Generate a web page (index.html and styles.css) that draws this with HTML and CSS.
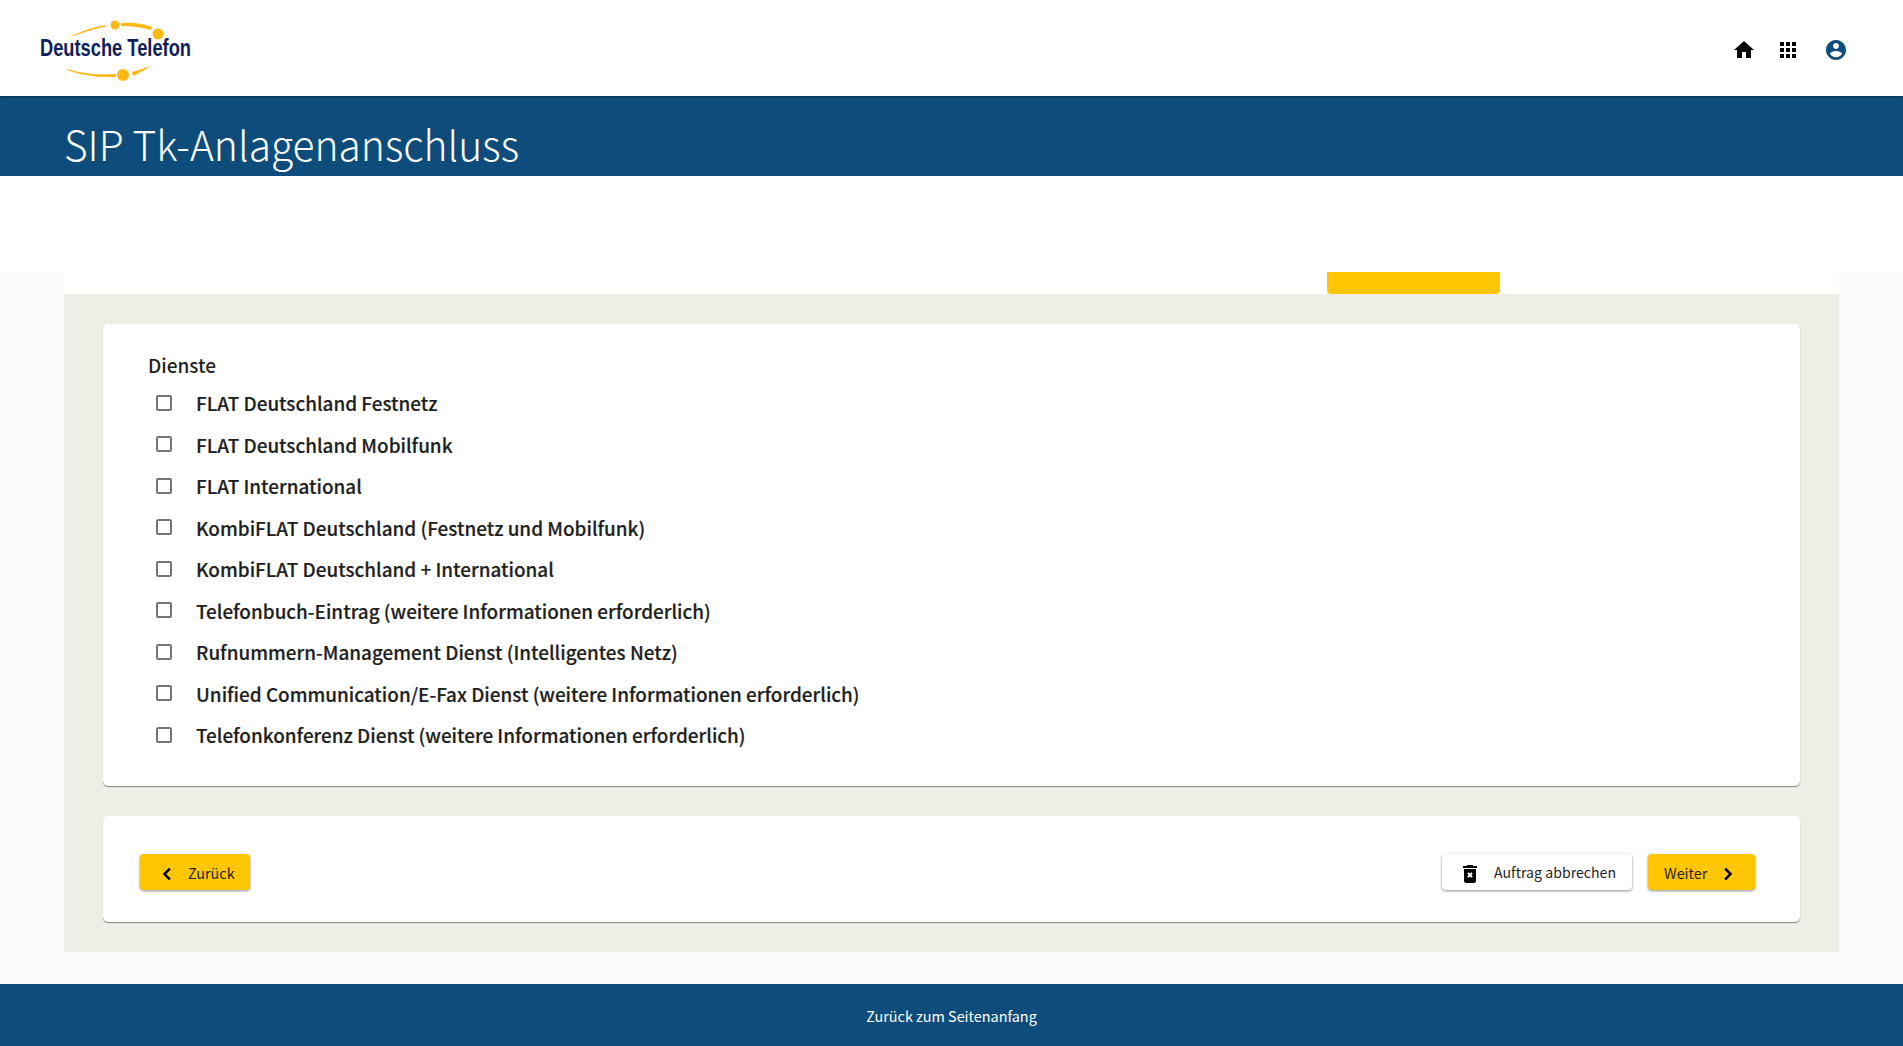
FILE: index.html
```html
<!DOCTYPE html>
<html lang="de">
<head>
  <meta charset="UTF-8" />
  <meta name="viewport" content="width=device-width, initial-scale=1.0" />
  <title>SIP Tk-Anlagenanschluss</title>
  <link rel="stylesheet" href="styles.css">
</head>
<body>
  <header class="topbar">
    <a class="logo" href="#">
      <svg width="152" height="58" viewBox="0 0 152 58">
        <path d="M31 16 Q48 8 66 5 L67 6 Q50 10 33 16 Z" class="logo-dot" />
        <path d="M81 3 Q98 2 112 7 L111 10 Q97 6 81 6 Z" class="logo-dot" />
        <circle cx="75" cy="5" r="4.5" class="logo-dot" />
        <circle cx="118" cy="14" r="5.5" class="logo-dot" />
        <path d="M27 49 Q48 56 76 54 L76 57 Q48 58 27 50 Z" class="logo-dot" />
        <circle cx="83" cy="55" r="6" class="logo-dot" />
        <path d="M92 52 Q103 49 110 46 Q104 51 93 56 Z" class="logo-dot" />
        <text x="0" y="35.500" class="logo-text" textLength="151" lengthAdjust="spacingAndGlyphs">Deutsche Telefon</text>
      </svg>
    </a>
    <nav class="topnav">
      <svg class="nav-icon" viewBox="0 0 24 24"><path d="M10 20v-6h4v6h5v-8h3L12 3 2 12h3v8z" /></svg>
      <svg class="nav-icon" viewBox="0 0 24 24"><path d="M4 8h4V4H4v4zm6 12h4v-4h-4v4zm-6 0h4v-4H4v4zm0-6h4v-4H4v4zm6 0h4v-4h-4v4zm6-10v4h4V4h-4zm-6 4h4V4h-4v4zm6 6h4v-4h-4v4zm0 6h4v-4h-4v4z" /></svg>
      <svg class="nav-icon nav-icon-blue" viewBox="0 0 24 24"><path d="M12 2C6.48 2 2 6.48 2 12s4.48 10 10 10 10-4.48 10-10S17.52 2 12 2zm0 3c1.66 0 3 1.34 3 3s-1.34 3-3 3-3-1.34-3-3 1.34-3 3-3zm0 14.2c-2.5 0-4.71-1.28-6-3.22.03-1.99 4-3.08 6-3.08 1.99 0 5.97 1.09 6 3.08-1.29 1.94-3.5 3.22-6 3.22z" /></svg>
    </nav>
  </header>

  <div class="banner">
    <h1>SIP Tk-Anlagenanschluss</h1>
  </div>

  <div class="stepper-space"></div>

  <main class="page">
    <div class="steps">
      <div class="step-active"></div>
    </div>
    <div class="panel">
      <section class="card card-services">
        <div class="group-title">Dienste</div>
        <label class="option"><input type="checkbox" /><span>FLAT Deutschland Festnetz</span></label>
        <label class="option"><input type="checkbox" /><span>FLAT Deutschland Mobilfunk</span></label>
        <label class="option"><input type="checkbox" /><span>FLAT International</span></label>
        <label class="option"><input type="checkbox" /><span>KombiFLAT Deutschland (Festnetz und Mobilfunk)</span></label>
        <label class="option"><input type="checkbox" /><span>KombiFLAT Deutschland + International</span></label>
        <label class="option"><input type="checkbox" /><span>Telefonbuch-Eintrag (weitere Informationen erforderlich)</span></label>
        <label class="option"><input type="checkbox" /><span>Rufnummern-Management Dienst (Intelligentes Netz)</span></label>
        <label class="option"><input type="checkbox" /><span>Unified Communication/E-Fax Dienst (weitere Informationen erforderlich)</span></label>
        <label class="option"><input type="checkbox" /><span>Telefonkonferenz Dienst (weitere Informationen erforderlich)</span></label>
      </section>
      <section class="card card-actions">
        <button class="btn btn-back">
          <svg class="btn-icon btn-chevron" viewBox="0 0 24 24"><path d="M15.41 7.41 14 6l-6 6 6 6 1.41-1.41L10.83 12z" /></svg>
          Zurück
        </button>
        <div class="actions-right">
          <button class="btn btn-cancel">
            <svg class="btn-icon" viewBox="0 0 24 24"><path d="M15.5 4l-1-1h-5l-1 1H5v2h14V4zM6 19c0 1.1.9 2 2 2h8c1.1 0 2-.9 2-2V7H6v12zm3.17-7.41 1.41-1.41L12 11.59l1.41-1.41 1.41 1.41L13.41 13l1.41 1.41-1.41 1.41L12 14.41l-1.41 1.41-1.41-1.41L10.59 13z" /></svg>
            <span class="cancel-label">Auftrag abbrechen</span>
          </button>
          <button class="btn btn-next">
            Weiter
            <svg class="btn-icon btn-chevron" viewBox="0 0 24 24"><path d="M10 6 8.59 7.41 13.17 12l-4.58 4.59L10 18l6-6z" /></svg>
          </button>
        </div>
      </section>
    </div>
  </main>

  <footer class="footer">
    <a href="#">Zurück zum Seitenanfang</a>
  </footer>
</body>
</html>
```
FILE: styles.css
```css
body {
  margin: 0;
  background: white;
  color: #1f1f1f;
  font-family: "Noto Sans CJK SC", "Noto Sans", sans-serif;
  font-size: 14.4px;
}
.topbar {
  height: 96px;
  display: flex;
  align-items: center;
  justify-content: space-between;
  padding: 0 55px 0 40px;
  box-shadow: 0 1px 2px rgba(0,0,0,0.4);
  position: relative;
}
.logo {
  display: block;
  height: 58px;
  margin-top: 1px;
}
.logo svg {
  display: block;
  overflow: visible;
}
.logo-dot {
  fill: #fdb813;
}
.logo-text {
  font-family: "Liberation Sans Narrow", "Liberation Sans", sans-serif;
  font-weight: bold;
  font-size: 23px;
  fill: #10205c;
}
.topnav {
  display: flex;
  gap: 20px;
  margin-top: 4px;
}
.nav-icon {
  width: 24px;
  height: 24px;
  fill: black;
}
.nav-icon-blue {
  margin-left: 4px;
  fill: #0e4d7b;
}
.banner {
  height: 80px;
  background: #0e4d7b;
}
.banner h1 {
  margin: 0;
  padding-left: 64px;
  color: white;
  font-size: 40.7px;
  font-weight: 300;
  line-height: 96px;
  height: 80px;
}
.stepper-space {
  height: 96px;
}
.page {
  height: 712px;
  box-sizing: border-box;
  padding: 0 64px 32px;
  background: #fafafa;
}
.steps {
  height: 22px;
  background: white;
}
.step-active {
  width: 173px;
  height: 22px;
  margin-left: 1263px;
  background: #ffc604;
  border-radius: 0 0 4px 4px;
}
.panel {
  background: #eeeee6;
  padding: 30px 39px;
  display: flex;
  flex-direction: column;
  gap: 30px;
}
.card {
  background: white;
  border-radius: 5px;
  box-shadow: 0 1px 1px rgba(0,0,0,0.45);
}
.card-services {
  height: 462px;
  box-sizing: border-box;
  padding: 26px 45px 0;
}
.group-title {
  font-size: 19px;
  font-weight: 500;
  line-height: 30px;
  margin-bottom: 2px;
}
.option {
  display: flex;
  align-items: center;
  gap: 24px;
  height: 41.5px;
  padding-left: 8px;
  font-size: 18.9px;
  font-weight: 500;
  -webkit-text-stroke: 0.2px #1f1f1f;
}
.option input {
  appearance: none;
  width: 16px;
  height: 16px;
  margin: 0;
  border: 2px solid #757575;
  border-radius: 2px;
  background: white;
}
.card-actions {
  height: 106px;
  box-sizing: border-box;
  padding: 38px 45px 0 37px;
  display: flex;
  justify-content: space-between;
  align-items: flex-start;
}
.actions-right {
  display: flex;
  gap: 16px;
}
.btn {
  height: 36px;
  display: flex;
  align-items: center;
  border: none;
  border-radius: 4px;
  font-family: inherit;
  font-size: 14.4px;
  color: #1f1f1f;
  white-space: nowrap;
  box-shadow: 0 1px 3px rgba(0,0,0,0.45);
}
.btn-icon {
  width: 24px;
  height: 24px;
  margin-top: 3px;
  fill: black;
}
.btn-chevron {
  stroke: black;
  stroke-width: 0.7;
}
.btn-back {
  width: 110px;
  padding: 0 0 0 15px;
  gap: 9px;
  background: #ffc604;
}
.btn-next {
  width: 107px;
  padding: 0 0 0 16px;
  gap: 9px;
  background: #ffc604;
}
.btn-cancel {
  width: 190px;
  padding: 0 0 0 16px;
  gap: 12px;
  background: white;
}
.cancel-label {
  font-size: 14.15px;
}
.footer {
  height: 62px;
  background: #0e4d7b;
  display: flex;
  align-items: center;
  justify-content: center;
}
.footer a {
  color: white;
  text-decoration: none;
}
```
